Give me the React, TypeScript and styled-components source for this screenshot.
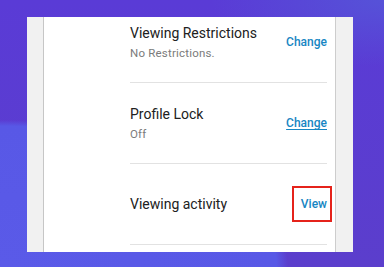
import React from "react";
import styled, { createGlobalStyle } from "styled-components";

const Global = createGlobalStyle`
  html, body { margin: 0; padding: 0; }
  body { font-family: Roboto, "Noto Sans", Arial, sans-serif; }
`;

const Stage = styled.div`
  width: 384px;
  height: 267px;
  overflow: hidden;
  box-sizing: border-box;
  padding: 17px 0 0 27px;
  background:
    radial-gradient(ellipse 75% 55% at 0% 100%, #5a5ae8 0%, #5858e6 96%, rgba(88, 88, 230, 0) 100%),
    radial-gradient(ellipse 45% 25% at 100% 0%, #5652d8 0%, rgba(86, 82, 216, 0) 100%),
    linear-gradient(180deg, #5a3bd6 0%, #5b3ecc 100%);
`;

const Panel = styled.div`
  width: 326px;
  height: 235px;
  display: flex;
  overflow: hidden;
`;

const Rail = styled.div<{ $side: "left" | "right" }>`
  flex: 0 0 auto;
  width: ${(p) => (p.$side === "left" ? 16 : 17)}px;
  background: #f1f1f1;
  ${(p) =>
    p.$side === "left"
      ? "border-right: 1px solid #c6c6c6;"
      : "border-left: 1px solid #cdcdcd;"}
`;

const Content = styled.div`
  flex: 1 1 auto;
  background: #ffffff;
  overflow: hidden;
`;

const List = styled.div`
  margin-top: -15px;
  display: flex;
  flex-direction: column;
`;

const Row = styled.div`
  box-sizing: border-box;
  height: 81px;
  margin: 0 8px 0 86px;
  border-bottom: 1px solid #e2e2e2;
  display: flex;
  align-items: center;
  justify-content: space-between;
`;

const TextBlock = styled.div`
  display: flex;
  flex-direction: column;
  gap: 4px;
`;

const Title = styled.div`
  font-size: 14px;
  line-height: 18px;
  color: #212121;
`;

const Subtitle = styled.div`
  font-size: 11.5px;
  line-height: 15px;
  color: #7b7b7b;
  letter-spacing: 0.2px;
`;

const Action = styled.span<{ $underline?: boolean }>`
  position: relative;
  display: inline-block;
  font-size: 12px;
  line-height: 16px;
  font-weight: 500;
  color: #1786c3;
  text-decoration: ${(p) => (p.$underline ? "underline" : "none")};
  text-underline-offset: 2px;
`;

const Highlight = styled.span`
  position: absolute;
  top: -10px;
  bottom: -10px;
  left: -9px;
  right: -5px;
  border: 2px solid #e5231b;
`;

type Item = {
  title: string;
  subtitle?: string;
  action: string;
  underline?: boolean;
  highlight?: boolean;
};

const items: Item[] = [
  { title: "Viewing Restrictions", subtitle: "No Restrictions.", action: "Change" },
  { title: "Profile Lock", subtitle: "Off", action: "Change", underline: true },
  { title: "Viewing activity", action: "View", highlight: true },
  { title: "", action: "" },
];

export default function App() {
  return (
    <>
      <Global />
      <Stage>
        <Panel>
          <Rail $side="left" />
          <Content>
            <List>
              {items.map((it, i) => (
                <Row key={i}>
                  <TextBlock>
                    {it.title && <Title>{it.title}</Title>}
                    {it.subtitle && <Subtitle>{it.subtitle}</Subtitle>}
                  </TextBlock>
                  {it.action && (
                    <Action $underline={it.underline}>
                      {it.action}
                      {it.highlight && <Highlight />}
                    </Action>
                  )}
                </Row>
              ))}
            </List>
          </Content>
          <Rail $side="right" />
        </Panel>
      </Stage>
    </>
  );
}
